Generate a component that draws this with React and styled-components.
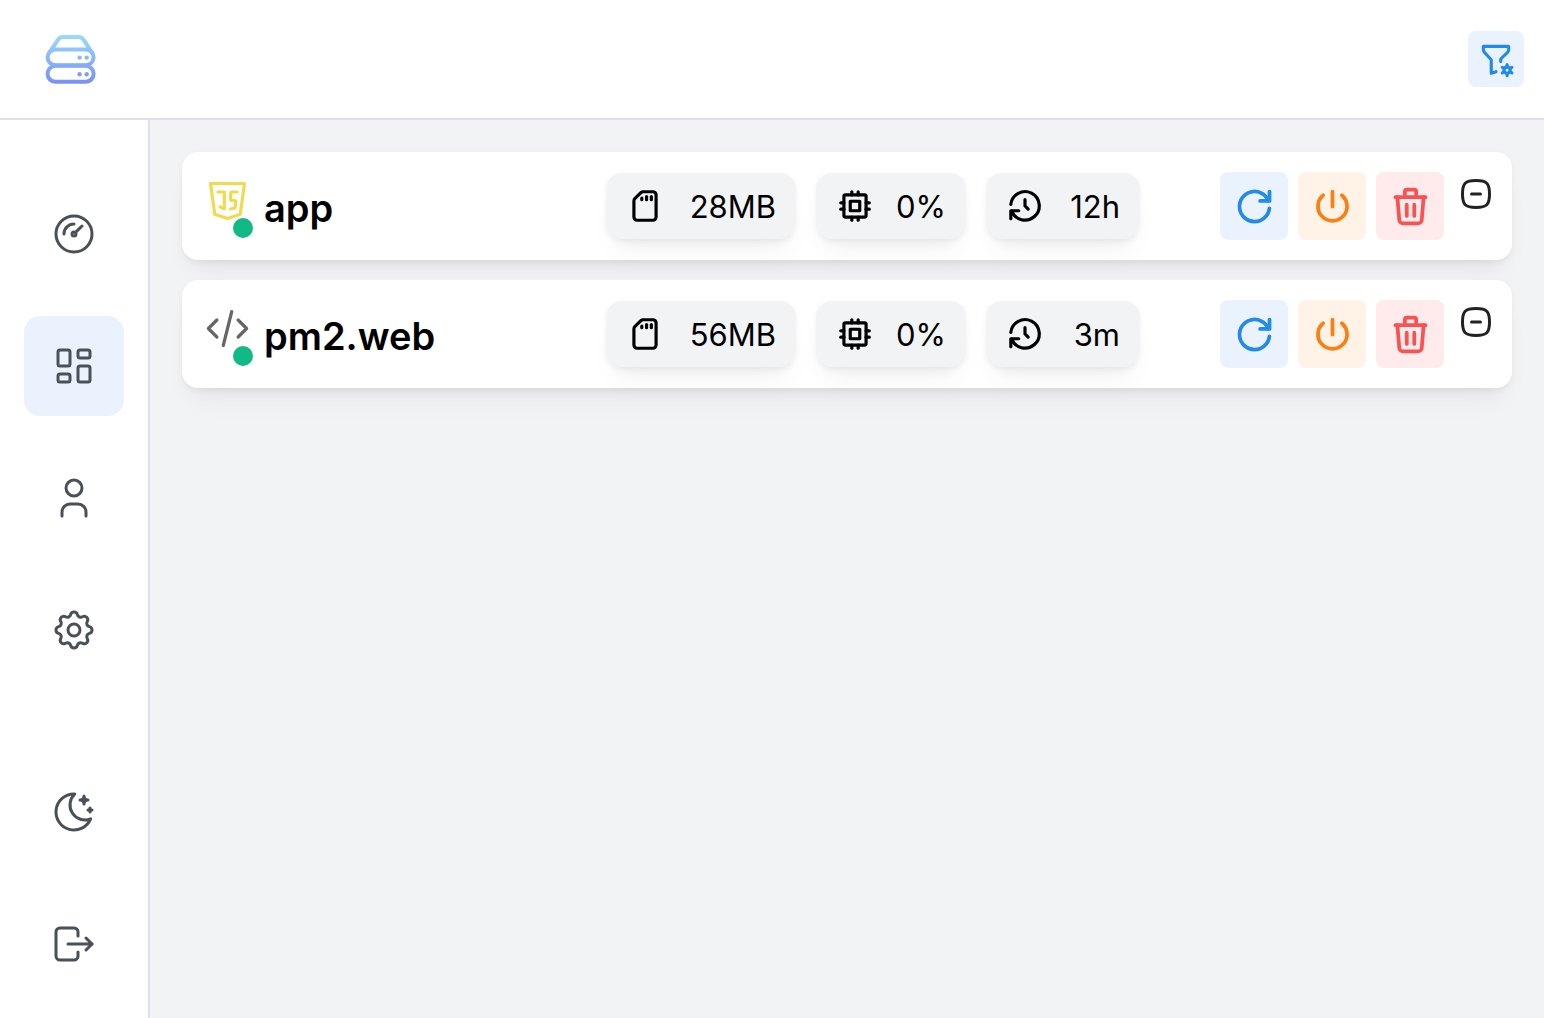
import React, { useState } from "react";

import styled, { createGlobalStyle } from "styled-components";
import {
  TbBrandJavascript,
  TbCode,
  TbCpu,
  TbDeviceSdCard,
  TbFilterCog,
  TbGauge,
  TbHistory,
  TbLayoutDashboard,
  TbLogout,
  TbMoonStars,
  TbPower,
  TbReload,
  TbSettings,
  TbSquareRoundedMinus,
  TbTrash,
  TbUser,
} from "react-icons/tb";

const processes = [
  { name: "app", type: "javascript", memory: "28MB", cpu: "0%", uptime: "12h" },
  { name: "pm2.web", type: "code", memory: "56MB", cpu: "0%", uptime: "3m" },
];

const pages = [
  { label: "Overview", icon: TbGauge },
  { label: "Processes", icon: TbLayoutDashboard },
  { label: "Users", icon: TbUser },
  { label: "Settings", icon: TbSettings },
];

const Logo = () => (
  <svg width="51" height="50" viewBox="0 0 51 50" fill="none" role="img" aria-label="Server">
    <defs>
      <linearGradient id="logo" x1="0" y1="0" x2="0" y2="50" gradientUnits="userSpaceOnUse">
        <stop offset="0" stopColor="#9bdcfd" />
        <stop offset="1" stopColor="#788ff5" />
      </linearGradient>
    </defs>
    <g stroke="url(#logo)" strokeWidth="4" strokeLinejoin="round">
      <path d="M4.2 19 L13 5.6 Q14.8 3 18 3 H33.5 Q36.7 3 38.5 5.6 L47.3 19" />
      <rect x="2.6" y="15.4" width="46" height="15.8" rx="7.9" />
      <rect x="2.6" y="31.8" width="46" height="16" rx="7.9" />
    </g>
    <g fill="url(#logo)">
      <circle cx="34.6" cy="23.6" r="2.2" />
      <circle cx="41.7" cy="23.6" r="2.2" />
      <circle cx="34.6" cy="40.2" r="2.2" />
      <circle cx="41.7" cy="40.2" r="2.2" />
    </g>
  </svg>
);

const ProcessCard = ({ process }) => {
  const { name, type, memory, cpu, uptime } = process;

  return (
    <Card>
      <TypeIcon>
        {type === "javascript"
          ? <TbBrandJavascript size={51} strokeWidth={1.5} color="#f0db4f" />
          : <TbCode size={51} strokeWidth={1.5} color="#666666" />}
        <StatusDot />
      </TypeIcon>
      <Name>{name}</Name>
      <Stats>
        <Stat><TbDeviceSdCard size={38} /><span>{memory}</span></Stat>
        <Stat><TbCpu size={38} /><span>{cpu}</span></Stat>
        <Stat><TbHistory size={38} /><span>{uptime}</span></Stat>
      </Stats>
      <Actions>
        <ActionButton type="button" $color="#228be6" $background="#eaf3fd" aria-label={`Restart ${name}`}>
          <TbReload size={45} />
        </ActionButton>
        <ActionButton type="button" $color="#fd7e14" $background="#fff2e6" aria-label={`Stop ${name}`}>
          <TbPower size={45} />
        </ActionButton>
        <ActionButton type="button" $color="#fa5252" $background="#ffebeb" aria-label={`Delete ${name}`}>
          <TbTrash size={45} />
        </ActionButton>
      </Actions>
      <ToggleButton type="button" aria-label={`Toggle ${name} details`}>
        <TbSquareRoundedMinus size={36} />
      </ToggleButton>
    </Card>
  );
};

const App = () => {
  const [page, setPage] = useState("Processes");

  return (
    <Page>
      <GlobalStyle />
      <Header>
        <Logo />
        <FilterButton type="button" aria-label="Filter">
          <TbFilterCog size={38} />
        </FilterButton>
      </Header>
      <Body>
        <Sidebar>
          <NavGroup>
            {pages.map(({ label, icon: Icon }) => (
              <NavButton
                key={label}
                type="button"
                aria-label={label}
                $active={page === label}
                onClick={() => setPage(label)}>
                <Icon size={48} strokeWidth={1.5} />
              </NavButton>
            ))}
          </NavGroup>
          <NavGroup>
            <NavButton type="button" aria-label="Toggle theme">
              <TbMoonStars size={48} strokeWidth={1.5} />
            </NavButton>
            <NavButton type="button" aria-label="Log out">
              <TbLogout size={48} strokeWidth={1.5} />
            </NavButton>
          </NavGroup>
        </Sidebar>
        <Main>
          {processes.map((process) => (
            <ProcessCard key={process.name} process={process} />
          ))}
        </Main>
      </Body>
    </Page>
  );
};

export default App;

const GlobalStyle = createGlobalStyle`
  * {
    box-sizing: border-box;
  }

  body {
    margin: 0;
    font-family: Inter, "Liberation Sans", sans-serif;
    color: #000;
    background-color: #f1f3f5;
  }

  svg {
    display: block;
    flex-shrink: 0;
  }
`;

const Page = styled.div`
  display: flex;
  flex-direction: column;
  min-height: 100vh;
`;

const Header = styled.header`
  display: flex;
  align-items: center;
  justify-content: space-between;
  height: 120px;
  padding: 0 20px 0 45px;
  background-color: #fff;
  border-bottom: 2px solid #dee2e6;
`;

const Body = styled.div`
  display: flex;
  flex: 1;
`;

const Sidebar = styled.nav`
  display: flex;
  flex-direction: column;
  justify-content: space-between;
  width: 150px;
  padding: 64px 24px 24px;
  background-color: #fff;
  border-right: 2px solid #dee2e6;
`;

const NavGroup = styled.div`
  display: flex;
  flex-direction: column;
  gap: 32px;
`;

const Button = styled.button`
  display: flex;
  align-items: center;
  justify-content: center;
  flex-shrink: 0;
  padding: 0;
  border: none;
  background: none;
  cursor: pointer;
`;

const NavButton = styled(Button)`
  width: 100px;
  height: 100px;
  border-radius: 16px;
  color: #495057;
  background-color: ${(props) => (props.$active ? "#eaf3fd" : "transparent")};
`;

const FilterButton = styled(Button)`
  width: 56px;
  height: 56px;
  border-radius: 8px;
  color: #228be6;
  background-color: #eaf3fd;
`;

const ActionButton = styled(Button)`
  width: 68px;
  height: 68px;
  border-radius: 8px;
  color: ${(props) => props.$color};
  background-color: ${(props) => props.$background};
`;

const ToggleButton = styled(Button)`
  align-self: flex-start;
  margin: 4px 0 0 14px;
  color: #222;
`;

const Main = styled.main`
  display: flex;
  flex: 1;
  flex-direction: column;
  gap: 20px;
  padding: 32px;
`;

const Card = styled.section`
  display: flex;
  align-items: center;
  padding: 20px 18px 20px 20px;
  border-radius: 16px;
  background-color: #fff;
  box-shadow: 0 2px 6px rgba(0, 0, 0, 0.05), 0 20px 30px -10px rgba(0, 0, 0, 0.05),
    0 14px 14px -10px rgba(0, 0, 0, 0.04);
`;

const TypeIcon = styled.div`
  position: relative;
  padding-bottom: 12px;
`;

const StatusDot = styled.span`
  position: absolute;
  right: 0;
  bottom: 0;
  width: 20px;
  height: 20px;
  border-radius: 50%;
  background-color: #12b886;
`;

const Name = styled.h2`
  flex: 1;
  margin: 0;
  padding: 4px 0 0 11px;
  font-size: 38px;
  line-height: 60px;
  font-weight: 600;
`;

const Stats = styled.div`
  display: grid;
  grid-template-columns: 190px 150px 154px;
  gap: 20px;
`;

const Stat = styled.div`
  display: flex;
  align-items: center;
  justify-content: space-between;
  height: 66px;
  padding: 0 20px;
  border-radius: 16px;
  font-size: 31px;
  background-color: #f1f3f5;
  box-shadow: 0 2px 6px rgba(0, 0, 0, 0.05), 0 20px 30px -10px rgba(0, 0, 0, 0.05),
    0 14px 14px -10px rgba(0, 0, 0, 0.04);
`;

const Actions = styled.div`
  display: flex;
  gap: 10px;
  margin-left: 80px;
`;
